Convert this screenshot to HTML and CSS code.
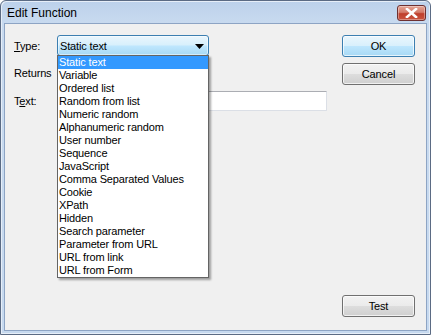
FILE: index.html
```html
<!DOCTYPE html>
<html>
<head>
<meta charset="utf-8">
<link rel="stylesheet" href="styles.css">
</head>
<body>
<div class="window">
  <div class="titlebar">
    <span class="title">Edit Function</span>
    <div class="close">
      <svg width="13" height="10" viewBox="0 0 13 10"><path d="M2 1 L11 9 M11 1 L2 9" stroke="#ffffff" stroke-width="2.6" stroke-linecap="square"/></svg>
    </div>
  </div>
  <div class="client">
    <div class="form">
      <div class="row row-type">
        <label class="label"><u>T</u>ype:</label>
        <div class="combo-wrap">
          <div class="combo">
            <span>Static text</span>
            <svg class="arrow" width="9" height="5" viewBox="0 0 9 5"><path d="M0 0 H9 L4.5 5 Z" fill="#000"/></svg>
          </div>
          <ul class="list">
            <li class="sel">Static text</li>
            <li>Variable</li>
            <li>Ordered list</li>
            <li>Random from list</li>
            <li>Numeric random</li>
            <li>Alphanumeric random</li>
            <li>User number</li>
            <li>Sequence</li>
            <li>JavaScript</li>
            <li>Comma Separated Values</li>
            <li>Cookie</li>
            <li>XPath</li>
            <li>Hidden</li>
            <li>Search parameter</li>
            <li>Parameter from URL</li>
            <li>URL from link</li>
            <li>URL from Form</li>
          </ul>
        </div>
      </div>
      <div class="row row-returns">
        <label class="label">Returns</label>
      </div>
      <div class="row row-text">
        <label class="label">T<u>e</u>xt:</label>
        <div class="input"></div>
      </div>
    </div>
    <div class="buttons">
      <div class="btn default">OK</div>
      <div class="btn">Cancel</div>
      <div class="btn test">Test</div>
    </div>
  </div>
</div>
</body>
</html>
```

FILE: styles.css
```css
html, body {
  margin: 0;
  padding: 0;
  background: #ffffff;
}
body {
  width: 431px;
  height: 335px;
  overflow: hidden;
  font-family: "Liberation Sans", Arial, sans-serif;
  font-size: 11px;
  letter-spacing: -0.15px;
  color: #000;
}
.window {
  box-sizing: border-box;
  width: 431px;
  height: 335px;
  border: 1px solid #5b6b84;
  border-radius: 6px 6px 0 0;
  background: linear-gradient(to bottom, #bcd1eb 0px, #c8daef 22px, #c6d9ef 100%);
  display: flex;
  flex-direction: column;
  padding: 0 3px 3px 3px;
  box-shadow: inset 1px 1px 0 #e6eef8, inset -1px -1px 0 #e6eef8;
}
.titlebar {
  height: 22px;
  display: flex;
  align-items: center;
  justify-content: space-between;
  padding-left: 3px;
}
.title {
  font-family: "Liberation Sans", Arial, sans-serif;
  font-size: 12px;
  letter-spacing: 0;
  color: #000;
  margin-top: 1px;
}
.close {
  box-sizing: border-box;
  width: 29px;
  height: 16px;
  margin-right: 1px;
  margin-top: 2px;
  border: 1px solid #6e3030;
  border-radius: 3px;
  background: linear-gradient(to bottom, #e5a595 0%, #d47b6a 45%, #bf3f2c 55%, #c9543f 100%);
  box-shadow: inset 0 0 0 1px rgba(255,255,255,0.35);
  display: flex;
  align-items: center;
  justify-content: center;
}
.client {
  flex: 1;
  background: #f0f0f0;
  border: 1px solid #8da4c4;
  display: flex;
  padding: 11px 11px 13px 9px;
}
.form {
  width: 313px;
  display: flex;
  flex-direction: column;
}
.row {
  display: flex;
  align-items: center;
}
.label {
  width: 43px;
  flex: none;
  white-space: nowrap;
}
.row-type { height: 21px; }
.row-returns { height: 13px; margin-top: 10px; }
.row-text { height: 20px; margin-top: 12px; }
.combo-wrap {
  position: relative;
  width: 152px;
  height: 21px;
}
.combo {
  box-sizing: border-box;
  width: 152px;
  height: 21px;
  border: 1px solid #3c7fb1;
  border-radius: 3px;
  background: linear-gradient(to bottom, #eaf6fd 0%, #d9f0fc 45%, #bee6fd 55%, #a7d9f5 100%);
  display: flex;
  align-items: center;
  justify-content: space-between;
  padding: 0 4px 0 2px;
  box-shadow: inset 0 0 0 1px rgba(255,255,255,0.5);
}
.arrow { margin-top: 1px; }
.list {
  position: absolute;
  left: 0;
  top: 20px;
  width: 152px;
  box-sizing: border-box;
  margin: 0;
  padding: 0;
  list-style: none;
  background: #ffffff;
  border: 1px solid #646464;
  box-shadow: 2px 2px 2px rgba(0,0,0,0.35);
  z-index: 10;
}
.list li {
  height: 13px;
  line-height: 13px;
  padding-left: 1px;
  white-space: nowrap;
}
.list li.sel {
  background: #3399ff;
  color: #ffffff;
}
.input {
  flex: 1;
  height: 20px;
  box-sizing: border-box;
  background: #ffffff;
  border: 1px solid #dbdfe6;
  border-top-color: #abadb3;
  border-left-color: #e2e3ea;
  border-radius: 1px;
}
.buttons {
  margin-left: auto;
  display: flex;
  flex-direction: column;
  gap: 6px;
}
.btn {
  box-sizing: border-box;
  width: 73px;
  height: 22px;
  border: 1px solid #707070;
  border-radius: 3px;
  background: linear-gradient(to bottom, #f2f2f2 0%, #ebebeb 48%, #dddddd 52%, #cfcfcf 100%);
  box-shadow: inset 0 0 0 1px rgba(255,255,255,0.7);
  display: flex;
  align-items: center;
  justify-content: center;
}
.btn.default {
  border-color: #3c7fb1;
  background: linear-gradient(to bottom, #eaf6fd 0%, #d9f0fc 48%, #bee6fd 52%, #a7d9f5 100%);
}
.btn.test { margin-top: auto; }
```
